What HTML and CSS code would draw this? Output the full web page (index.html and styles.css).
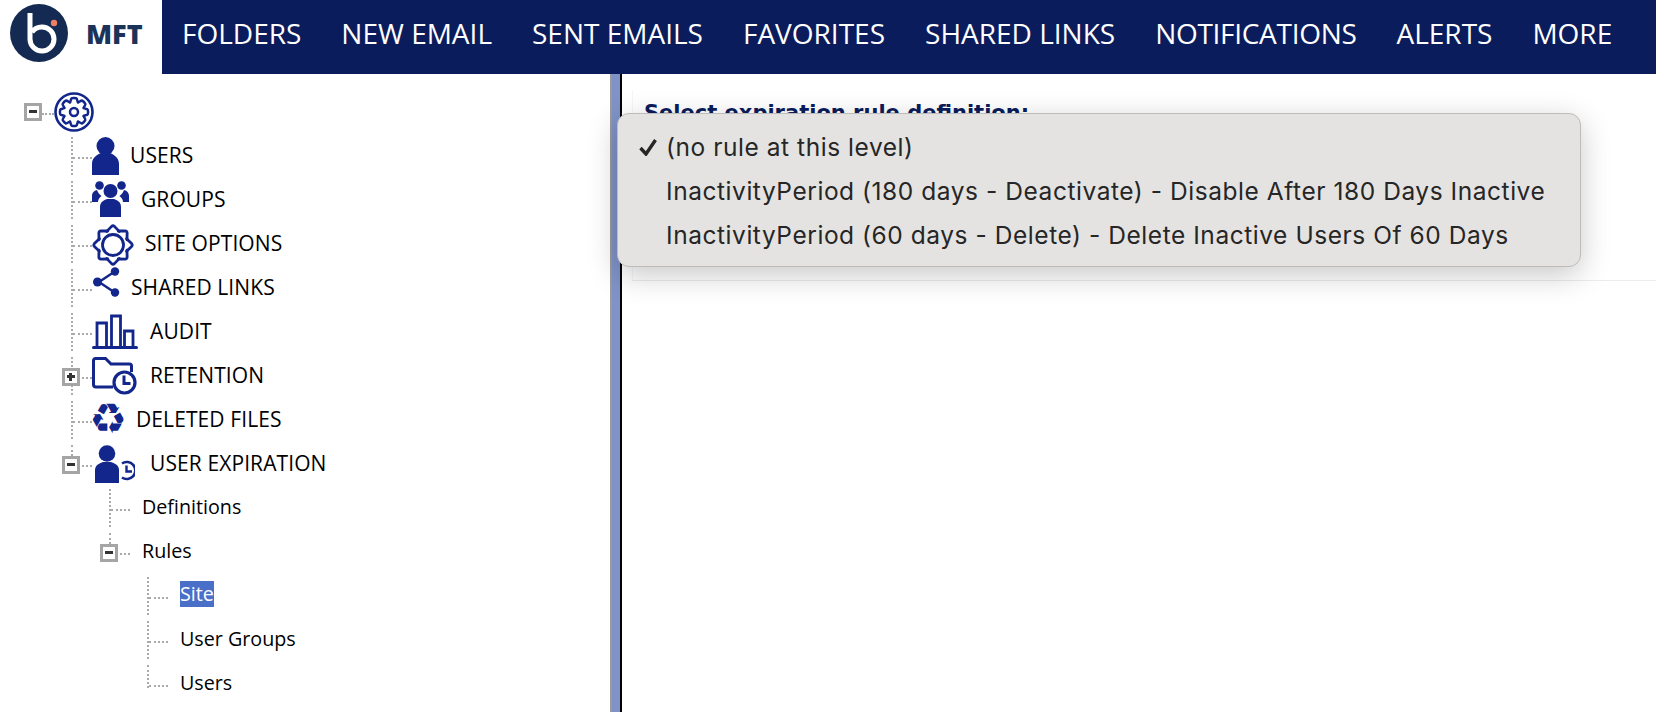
FILE: index.html
```html
<!DOCTYPE html>
<html lang="en">
<head>
<meta charset="utf-8">
<title>MFT</title>
<link rel="stylesheet" href="styles.css">
</head>
<body>
<header class="topbar">
  <div class="brand">
    <svg class="brand-mark" viewBox="0 0 58 58"><circle cx="29" cy="29" r="29" fill="#152a52"/><path d="M20 9V35A12 12 0 1 0 32 23A12 12 0 0 0 22 28" fill="none" stroke="#fff" stroke-width="5"/><circle cx="44" cy="19" r="3.2" fill="#ef7f62"/></svg>
    <span class="brand-name">MFT</span>
  </div>
  <nav class="nav">
    <a class="nav-item">FOLDERS</a>
    <a class="nav-item">NEW EMAIL</a>
    <a class="nav-item">SENT EMAILS</a>
    <a class="nav-item">FAVORITES</a>
    <a class="nav-item">SHARED LINKS</a>
    <a class="nav-item nav-item-tight">NOTIFICATIONS</a>
    <a class="nav-item">ALERTS</a>
    <a class="nav-item">MORE</a>
  </nav>
</header>
<main class="workspace">
  <aside class="tree-pane">
    <div class="root-row">
      <span class="toggle"><i class="minus"></i></span>
      <span class="root-link"></span>
      <svg class="root-icon" viewBox="0 0 40 40">
        <defs><path id="tooth" d="M-4.020 -9.700C-3.200 -10.500 -3.400 -13.500 -2.200 -13.800Q0 -14.400 2.200 -13.800C3.400 -13.500 3.200 -10.500 4.020 -9.700" fill="none" stroke="#12268c" stroke-width="2.500" stroke-linecap="round"/></defs>
        <circle cx="20" cy="20" r="18.500" fill="none" stroke="#12268c" stroke-width="2.600"/>
        <g transform="translate(20 20)">
          <use href="#tooth"/><use href="#tooth" transform="rotate(45)"/><use href="#tooth" transform="rotate(90)"/><use href="#tooth" transform="rotate(135)"/><use href="#tooth" transform="rotate(180)"/><use href="#tooth" transform="rotate(225)"/><use href="#tooth" transform="rotate(270)"/><use href="#tooth" transform="rotate(315)"/>
          <circle r="4" fill="none" stroke="#12268c" stroke-width="2.500"/>
        </g>
      </svg>
    </div>
    <ul class="tree level-one">
      <li class="row">
        <span class="branch"><i></i></span>
        <svg class="icon icon-users" viewBox="0 0 27 38"><circle cx="13.500" cy="9" r="9" fill="#12268c"/><path d="M0 38V27C0 20 6 17.500 9 16H18C21 17.500 27 20 27 27V38Z" fill="#12268c"/></svg>
        <span class="label">USERS</span>
      </li>
      <li class="row">
        <span class="branch"><i></i></span>
        <svg class="icon icon-groups" viewBox="0 0 37 36"><circle cx="7.500" cy="4.500" r="4.300" fill="#12268c"/><circle cx="29.500" cy="4.500" r="4.300" fill="#12268c"/><path d="M0 21V15C0 11 3 9.500 5 9C6 12 8 14 9.500 15C7 17 6 19 6 21Z" fill="#12268c"/><path d="M37 21V15C37 11 34 9.500 32 9C31 12 29 14 27.500 15C30 17 31 19 31 21Z" fill="#12268c"/><circle cx="18.500" cy="10" r="7" fill="#12268c"/><path d="M8 36V26C8 21 12 19 15 18H22C25 19 29 21 29 26V36Z" fill="#12268c"/></svg>
        <span class="label">GROUPS</span>
      </li>
      <li class="row">
        <span class="branch"><i></i></span>
        <svg class="icon icon-options" viewBox="0 0 42 42">
          <defs><path id="ray" d="M-6.200 -13.600L-1.400 -18.600Q0 -19.800 1.400 -18.600L6.200 -13.600" fill="none" stroke="#12268c" stroke-width="2.800" stroke-linejoin="round" stroke-linecap="round"/></defs>
          <g transform="translate(21 21)">
            <use href="#ray"/><use href="#ray" transform="rotate(45)"/><use href="#ray" transform="rotate(90)"/><use href="#ray" transform="rotate(135)"/><use href="#ray" transform="rotate(180)"/><use href="#ray" transform="rotate(225)"/><use href="#ray" transform="rotate(270)"/><use href="#ray" transform="rotate(315)"/>
            <circle r="10.500" fill="none" stroke="#12268c" stroke-width="2.800"/>
          </g>
        </svg>
        <span class="label">SITE OPTIONS</span>
      </li>
      <li class="row">
        <span class="branch"><i></i></span>
        <svg class="icon icon-share" viewBox="0 0 28 30"><path d="M7 15L22 5M7 15L22 25" stroke="#12268c" stroke-width="2.400" fill="none"/><circle cx="5.500" cy="15" r="4.500" fill="#12268c"/><circle cx="23" cy="4.500" r="4.200" fill="#12268c"/><circle cx="23" cy="25.500" r="4.200" fill="#12268c"/></svg>
        <span class="label">SHARED LINKS</span>
      </li>
      <li class="row">
        <span class="branch"><i></i></span>
        <svg class="icon icon-audit" viewBox="0 0 46 36"><path d="M5 33V9H14.500V33M19.500 33V2H28.500V33M32.500 33V17H41V33" fill="none" stroke="#12268c" stroke-width="2.800"/><path d="M1.500 33.500H44.500" stroke="#12268c" stroke-width="3" stroke-linecap="round"/></svg>
        <span class="label">AUDIT</span>
      </li>
      <li class="row">
        <span class="branch"><span class="toggle toggle-over"><i class="minus"></i><i class="plus"></i></span><i></i></span>
        <svg class="icon icon-retention" viewBox="0 0 46 38"><path d="M21 30H4A2.500 2.500 0 0 1 1.500 27.500V3.500A2 2 0 0 1 3.500 1.500H13.500L19 7H37.500A2 2 0 0 1 39.500 9V15" fill="none" stroke="#12268c" stroke-width="3"/><circle cx="32.500" cy="25.500" r="10.500" fill="#fff" stroke="#12268c" stroke-width="3.200"/><path d="M32 18.500V26.500H38.500" fill="none" stroke="#12268c" stroke-width="3"/></svg>
        <span class="label">RETENTION</span>
      </li>
      <li class="row">
        <span class="branch"><i></i></span>
        <span class="icon icon-recycle">♻</span>
        <span class="label">DELETED FILES</span>
      </li>
      <li class="parent">
        <div class="row">
          <span class="branch branch-end"><span class="toggle toggle-over"><i class="minus"></i></span><i></i></span>
          <svg class="icon icon-expire" viewBox="0 0 40 38"><circle cx="12" cy="8.500" r="8.300" fill="#12268c"/><path d="M0 38V25C0 20 5 18 8 17H16C19 18 24 20 24 25V38Z" fill="#12268c"/><path d="M27 18.500A8.500 8.500 0 1 1 27 32.500" fill="none" stroke="#12268c" stroke-width="2.600"/><path d="M31.500 20.500V26.500H37" fill="none" stroke="#12268c" stroke-width="2.400"/></svg>
          <span class="label">USER EXPIRATION</span>
        </div>
        <ul class="tree nested">
          <li class="row">
            <span class="branch"><i></i></span>
            <span class="label label-leaf">Definitions</span>
          </li>
          <li class="parent">
            <div class="row">
              <span class="branch branch-end"><span class="toggle toggle-over"><i class="minus"></i></span><i></i></span>
              <span class="label label-leaf">Rules</span>
            </div>
            <ul class="tree nested">
              <li class="row">
                <span class="branch"><i></i></span>
                <span class="label label-leaf selected">Site</span>
              </li>
              <li class="row">
                <span class="branch"><i></i></span>
                <span class="label label-leaf">User Groups</span>
              </li>
              <li class="row">
                <span class="branch branch-end"><i></i></span>
                <span class="label label-leaf">Users</span>
              </li>
            </ul>
          </li>
        </ul>
      </li>
    </ul>
  </aside>
  <div class="splitter"></div>
  <section class="content">
    <div class="card">
      <h2 class="card-title">Select expiration rule definition:</h2>
    </div>
  </section>
</main>
<div class="popup" role="listbox">
  <div class="option">
    <svg class="check" viewBox="0 0 18 18"><path d="M1.500 10L7 16L16.500 2" fill="none" stroke="#262626" stroke-width="3.400"/></svg>
    <span>(no rule at this level)</span>
  </div>
  <div class="option"><span class="check"></span><span>InactivityPeriod (180 days - Deactivate) - Disable After 180 Days Inactive</span></div>
  <div class="option"><span class="check"></span><span>InactivityPeriod (60 days - Delete) - Delete Inactive Users Of 60 Days</span></div>
</div>
</body>
</html>
```

FILE: styles.css
```css
* { box-sizing: border-box; }
html, body { height: 100%; }
body {
  margin: 0;
  overflow: hidden;
  background: #fff;
  font-family: "Open Sans", sans-serif;
  color: #000;
}
.topbar { display: flex; height: 74px; }
.brand {
  width: 162px;
  display: flex;
  align-items: center;
  padding: 0 0 8px 10px;
  background: #fff;
}
.brand-mark { width: 58px; height: 58px; flex: none; }
.brand-name {
  margin-left: 18px;
  font: 800 27px "Open Sans", sans-serif;
  color: #1b3358;
}
.nav {
  flex: 1;
  display: flex;
  gap: 40px;
  padding: 11px 0 0 20px;
  background: #0b1c5c;
}
.nav-item {
  font-size: 28px;
  line-height: 44px;
  color: #fff;
  white-space: nowrap;
}
.nav-item-tight { letter-spacing: -.3px; }
.workspace { display: flex; height: 638px; }
.tree-pane {
  width: 610px;
  flex: none;
  padding-top: 18px;
  overflow: hidden;
}
.root-row {
  display: flex;
  align-items: center;
  height: 40px;
  margin: 0 0 5px 24px;
}
.root-link {
  width: 12px;
  height: 0;
  border-top: 2px dotted #aaa;
  margin-top: 4px;
}
.root-icon { width: 40px; height: 40px; }
.tree { list-style: none; margin: 0; padding: 0; }
.level-one { margin-left: 71px; }
.nested { margin-left: 38px; }
.row { display: flex; height: 44px; }
.branch {
  position: relative;
  flex: none;
  width: 21px;
  height: 38px;
  border-left: 2px dotted #aaa;
}
.branch > i {
  display: block;
  height: 22px;
  border-bottom: 2px dotted #aaa;
}
.branch-end { height: 23px; }
.toggle {
  position: relative;
  display: block;
  flex: none;
  width: 18px;
  height: 18px;
  background: #fff;
  border: 3px solid #a5a5a5;
}
.toggle-over { position: absolute; left: -11px; top: 11px; z-index: 1; }
.minus, .plus { position: absolute; background: #333; }
.minus { left: 2px; top: 4px; width: 8px; height: 3px; }
.plus { left: 4px; top: 2px; width: 3px; height: 8px; }
.icon { display: block; flex: none; height: 38px; }
.icon-users { width: 27px; margin-right: 11px; }
.icon-groups { width: 37px; height: 36px; margin-right: 12px; }
.icon-options { width: 42px; height: 42px; margin: -1px 11px 0 0; }
.icon-share { width: 28px; height: 30px; margin: -2px 11px 0 0; }
.icon-audit { width: 46px; height: 36px; margin: 1px 12px 0 0; }
.icon-retention { width: 46px; margin-right: 12px; }
.icon-recycle {
  width: 32px;
  margin: 0 12px 0 0;
  font: 42px/36px "DejaVu Sans", sans-serif;
  color: #12268c;
  text-align: center;
  display: flex;
  justify-content: center;
}
.icon-expire { width: 40px; margin: 0 15px 0 3px; }
.label {
  height: 26px;
  margin-top: 5px;
  font-size: 21px;
  line-height: 26px;
  letter-spacing: .1px;
  white-space: nowrap;
}
.label-leaf { margin-left: 12px; font-size: 19.7px; letter-spacing: 0; }
.selected { margin-top: 4px; background: #4a6fc9; color: #fff; }
.splitter {
  width: 12px;
  flex: none;
  background: #7f93c8;
  border-left: 2px solid #9a9a9a;
  border-right: 2px solid #000;
}
.content { flex: 1; padding: 16px 0 0 10px; }
.card {
  height: 191px;
  padding: 10px 0 0 11px;
  border-bottom: 1px solid #ececec;
  border-left: 1px solid #f6f6f6;
}
.card-title {
  margin: 0;
  font: 700 21px/26px "DejaVu Sans", sans-serif;
  color: #0b1c5c;
}
.popup {
  position: absolute;
  left: 617px;
  top: 113px;
  width: 964px;
  height: 154px;
  padding: 11px 0 0 21px;
  background: #e4e3e2;
  border: 1px solid #bdbcbb;
  border-radius: 12px;
  box-shadow: 0 8px 30px rgba(0, 0, 0, .22);
  font-family: Inter, sans-serif;
  font-size: 24.5px;
  letter-spacing: .55px;
  color: #262626;
}
.option { display: flex; align-items: center; height: 44px; white-space: nowrap; }
.check { display: block; width: 18px; height: 18px; margin-right: 9px; flex: none; }
```
